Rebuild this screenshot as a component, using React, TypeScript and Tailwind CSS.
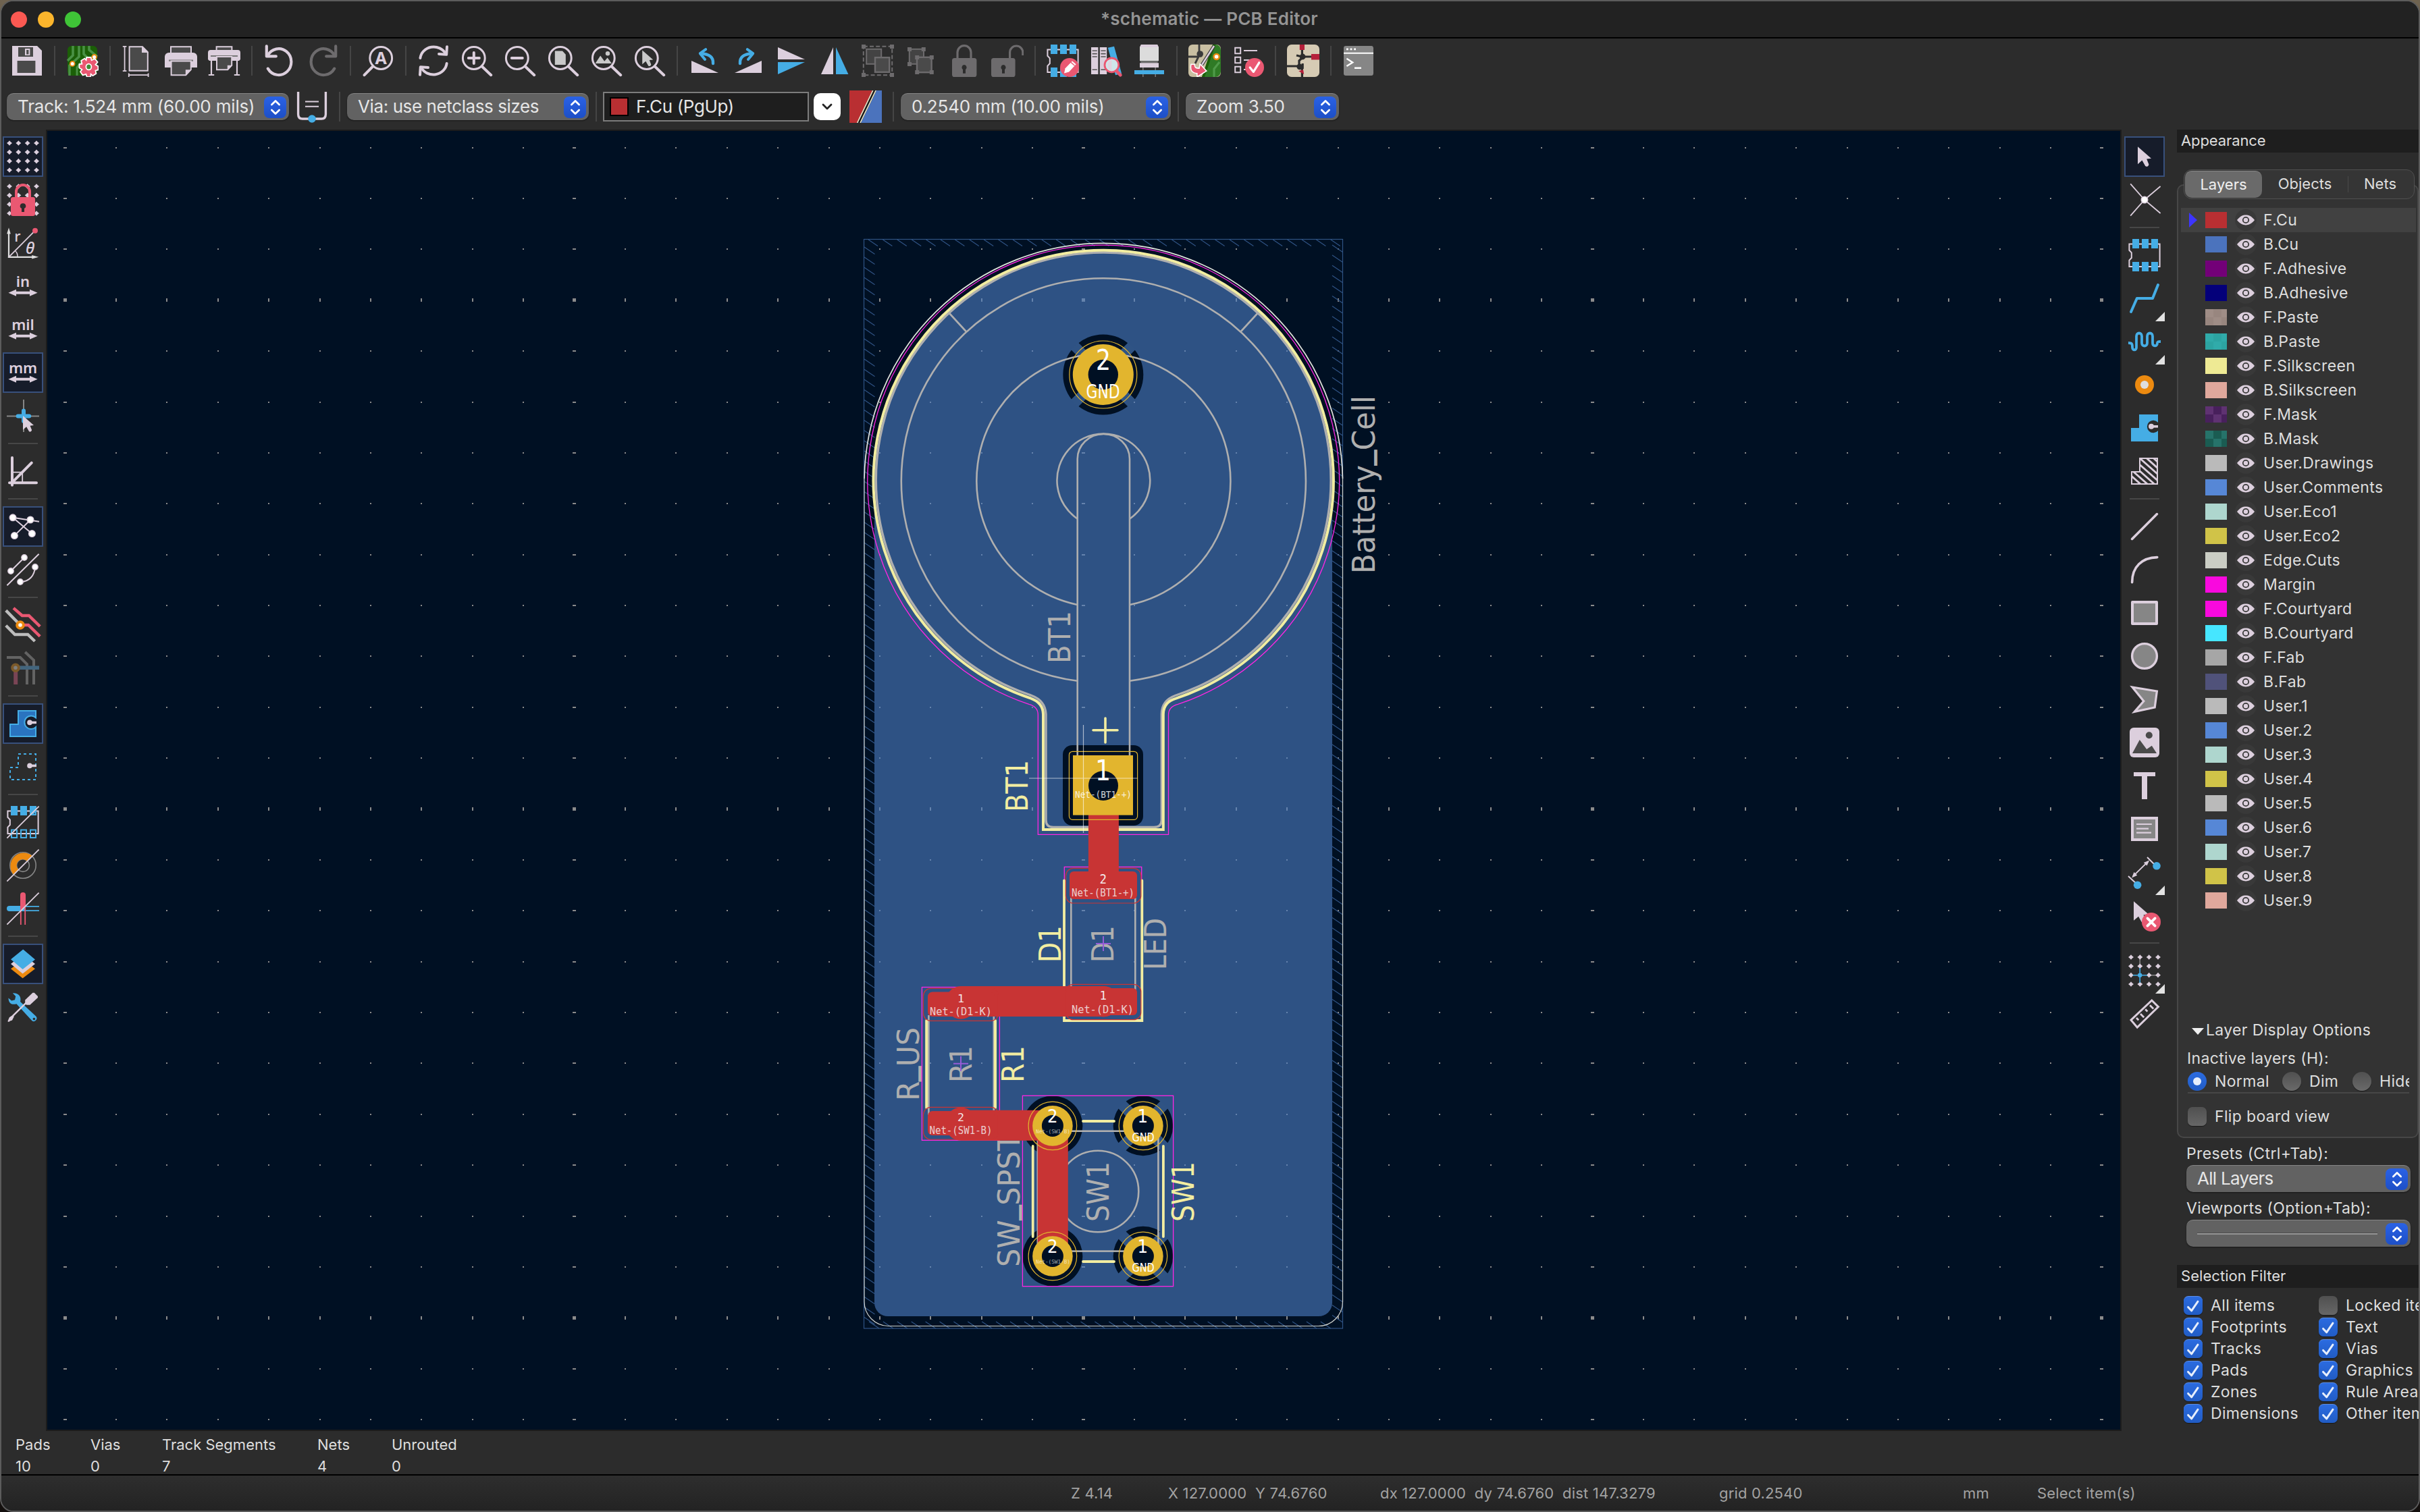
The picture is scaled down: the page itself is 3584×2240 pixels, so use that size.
import React from "react";

const L = "#dccfdd";
const B = "#45ade5";
const P = "#ea5872";
const O = "#ec8a10";
const D = "#4a4a4a";
const G = "#6d6b6d";
const BG = "#2c2c2c";

function Ico({ children, className = "" }: { children: React.ReactNode; className?: string }) {
  return (
    <svg viewBox="0 0 24 24" className={"size-12 shrink-0 " + className} fill="none">
      {children}
    </svg>
  );
}

/* ---------- shared icon pieces ---------- */

const steps = [2, 8.67, 15.33, 22];

function Dots({ skip = () => false }: { skip?: (i: number, j: number) => boolean }) {
  return (
    <g fill={L}>
      {steps.map((y, j) =>
        steps.map((x, i) =>
          skip(i, j) ? null : (
            <path key={`${i}-${j}`} d={`M${x - 2} ${y}l1.1-.9.9-1 .9 1 1.1.9-1.1.9-.9 1-.9-1z`} />
          ),
        ),
      )}
    </g>
  );
}

function Lens({ children }: { children?: React.ReactNode }) {
  return (
    <>
      <circle cx="9.9" cy="10" r="8.2" stroke={L} strokeWidth="1.5" />
      <path d="M16.2 16.5L22.6 22.6" stroke={L} strokeWidth="2" strokeLinecap="round" />
      {children}
    </>
  );
}

const ChipBody = () => (
  <path d="M.7 3.7H23.3V20.5H.7V15.8L2.4 14V10.2L.7 8.4Z" stroke={L} strokeWidth="1" />
);

const Cursor = ({ x = 0, y = 0, fill = L }: { x?: number; y?: number; fill?: string }) => (
  <g transform={`translate(${x} ${y})`}>
    <path d="M0 0V13L3.2 10.2 5.6 14.4A1.6 1.6 0 0 0 8.2 13.2L6.6 9.2 10 8.8Z" fill={fill} />
  </g>
);

const Arrows = () => (
  <path d="M1.2 16.9L7 14.4V15.9H17V14.4L22.8 16.9 17 19.4V17.9H7V19.4Z" fill={L} />
);

const UnitText = ({ t }: { t: string }) => (
  <>
    <text x="12" y="12.7" fontSize="11" fontWeight="600" textAnchor="middle" fontFamily="'Noto Sans', sans-serif" fill={L}>
      {t}
    </text>
    <Arrows />
  </>
);

/* ---------- top toolbar ---------- */

const topIcons: Record<string, React.ReactNode> = {
  save: (
    <>
      <path d="M1 1H19.5L23 4.5V23H1Z" fill={L} />
      <path d="M5.5 2H16.5V9H5.5Z" fill={D} />
      <path d="M10.5 3H14.2V8H10.5Z" fill={L} />
      <path d="M11.6 4H13.2V7.2H11.6Z" fill={D} />
      <path d="M4.8 12H18.2V21H4.8Z" fill={D} />
    </>
  ),
  setup: (
    <>
      <rect x="1" y="1" width="22" height="22" rx="3" fill="#1b5f07" />
      <path d="M5 1V8L1 12M9.5 1V9L2.5 15.5V23M13 1V7L18 12M17 1V4L23 9" stroke="#4a9145" strokeWidth="1.8" />
      <path d="M8 23V17L12 12" stroke="#4a9145" strokeWidth="1.5" />
      <circle cx="4.6" cy="14.2" r="1.7" fill="#fff" stroke={O} strokeWidth=".9" />
      <circle cx="20.8" cy="9.2" r="1.7" fill="#fff" stroke={O} strokeWidth=".9" />
      <g transform="translate(16.7 16.5)">
        <path
          d="M-1.6-7H1.6L2.1-4.9 4.5-6 6.6-3.5 5-1.6 7-.4V2.2L5 2.8 5.5 5 3 6.6 1.6 5.4 1.4 7.4H-1.4L-2 5.4-4.4 6.2-6.2 3.6-5 2-7 .8V-2L-5-2.2-5.6-4.6-3-6.2-1.9-5Z"
          fill={P}
          stroke="#fff"
          strokeWidth=".9"
        />
        <ellipse rx="2" ry="2.2" fill="#3f8a35" stroke="#fff" strokeWidth=".9" />
      </g>
    </>
  ),
  page: (
    <>
      <path d="M5.8 1.6H15.5L19.4 5.6V19.4H5.8Z" fill={D} stroke={L} strokeWidth="1" />
      <path d="M15 1.2V6H19.9Z" fill={L} />
      <path d="M2.3 1.4V19.6M.9 1.4H3.7M.9 19.6H3.7M5.4 22.6H19.8M5.4 21.2V24M19.8 21.2V24" stroke={L} strokeWidth=".9" />
    </>
  ),
  print: (
    <>
      <path d="M4.5 1.6H19.5V8H4.5Z" fill={D} stroke={L} strokeWidth="1" />
      <path d="M3 6H21A3 3 0 0 1 24 9V17H0V9A3 3 0 0 1 3 6Z" fill={L} />
      <path d="M3 11.2H21V12.4H3Z" fill="#777" />
      <path d="M4.8 12.2H19.4V18.6L15.6 22.6H4.8Z" fill={D} stroke={L} strokeWidth="1" />
      <path d="M15.4 22.8V18.6H19.6Z" fill={L} />
    </>
  ),
  plot: (
    <>
      <path d="M6.3 1.6H17.7V6H6.3Z" fill={D} stroke={L} strokeWidth="1" />
      <path d="M2 4H22A2 2 0 0 1 24 6V11L23 12H1L0 11V6A2 2 0 0 1 2 4Z" fill={L} />
      <path d="M2 8H22V9H2Z" fill="#777" />
      <path d="M6.5 9H17.6V15.4L14.6 18.6H6.5Z" fill={D} stroke={L} strokeWidth="1" />
      <path d="M14.4 18.8V15.4H17.8Z" fill={L} />
      <path d="M2.5 12V22.4M21.5 12V22.4M.4 22.5H4.6M19.4 22.5H23.6" stroke={L} strokeWidth="1.1" />
    </>
  ),
  undo: (
    <>
      <path d="M3.2 8.2A9.3 9.7 0 1 1 3.4 17.8" stroke={L} strokeWidth="2.1" strokeLinecap="round" />
      <path d="M2.4 1.2V8.7H9.4" stroke={L} strokeWidth="2.1" strokeLinecap="round" strokeLinejoin="round" />
    </>
  ),
  redo: (
    <g transform="translate(24 0) scale(-1 1)" stroke={G} strokeWidth="2.1" strokeLinecap="round" strokeLinejoin="round">
      <path d="M3.2 8.2A9.3 9.7 0 1 1 3.4 17.8" />
      <path d="M2.4 1.2V8.7H9.4" />
    </g>
  ),
  find: (
    <>
      <circle cx="14.1" cy="10" r="8.2" stroke={L} strokeWidth="1.5" />
      <path d="M7.8 16.5L1.8 22.6" stroke={L} strokeWidth="2" strokeLinecap="round" />
      <text x="14.1" y="14.5" fontSize="12.5" fontWeight="700" textAnchor="middle" fontFamily="'Noto Sans', sans-serif" fill={L}>
        A
      </text>
    </>
  ),
  refresh: (
    <g stroke={L} strokeWidth="2" strokeLinecap="round" strokeLinejoin="round">
      <path d="M2.2 10A10 9.4 0 0 1 21 6.8" />
      <path d="M22 1.6L21.6 7.4 16 7" />
      <path d="M21.8 14A10 9.4 0 0 1 3 17.2" />
      <path d="M2 22.4L2.4 16.6 8 17" />
    </g>
  ),
  zin: (
    <Lens>
      <path d="M9.9 6V14M5.9 10H13.9" stroke={L} strokeWidth="2" strokeLinecap="round" />
    </Lens>
  ),
  zout: (
    <Lens>
      <path d="M5.9 10H13.9" stroke={L} strokeWidth="2" strokeLinecap="round" />
    </Lens>
  ),
  zpage: (
    <Lens>
      <path d="M5.9 4.8H11.5L13.9 7.4V15H5.9Z" fill="#c9c9c9" />
    </Lens>
  ),
  zobj: (
    <Lens>
      <path d="M3.8 14L7.6 8.2 10.6 12.4 12.8 9.8 16 14Z" fill="#c9c9c9" />
      <circle cx="13" cy="6.6" r="1.6" fill="#c9c9c9" />
    </Lens>
  ),
  zsel: (
    <Lens>
      <g transform="translate(6.6 4.2) scale(.8)">
        <Cursor fill="#c9c9c9" />
      </g>
    </Lens>
  ),
  rccw: (
    <>
      <path d="M2 12V21H22Z" fill={L} />
      <path d="M18 14C18.4 9.4 15.4 7 9 6.6" stroke={B} strokeWidth="2.2" strokeLinecap="round" />
      <path d="M12.6 3.6L8.4 6.6 12 11" stroke={B} strokeWidth="2" strokeLinecap="round" strokeLinejoin="round" />
    </>
  ),
  rcw: (
    <g transform="translate(24 0) scale(-1 1)">
      <path d="M2 12V21H22Z" fill={L} />
      <path d="M18 14C18.4 9.4 15.4 7 9 6.6" stroke={B} strokeWidth="2.2" strokeLinecap="round" />
      <path d="M12.6 3.6L8.4 6.6 12 11" stroke={B} strokeWidth="2" strokeLinecap="round" strokeLinejoin="round" />
    </g>
  ),
  mv: (
    <>
      <path d="M2 2V11H22Z" fill={L} />
      <path d="M2 22V13H22Z" fill={B} />
    </>
  ),
  mh: (
    <>
      <path d="M11 2V22H2Z" fill={L} />
      <path d="M13 2V22H22.2Z" fill={B} />
    </>
  ),
  group: (
    <g stroke={G}>
      <rect x="1.4" y="1.4" width="21.2" height="21.2" strokeWidth="1" strokeDasharray="3 1.6" />
      <g fill={G} stroke="none">
        <path d="M0 0H3V3H0ZM21 0H24V3H21ZM0 21H3V24H0ZM21 21H24V24H21Z" />
      </g>
      <rect x="3.6" y="3.4" width="11" height="11" fill="#434343" strokeWidth="1" />
      <rect x="10" y="9.6" width="10.6" height="10.8" fill={D} strokeWidth="1.2" />
    </g>
  ),
  ungroup: (
    <g stroke={G}>
      <rect x="3.4" y="3.4" width="10.6" height="11" fill="#434343" strokeWidth="1" />
      <rect x="9" y="9.4" width="10.8" height="11.2" fill={D} strokeWidth="1.2" />
      <path
        d="M2 2H5V5H2ZM12.4 2H15.4V5H12.4ZM2 13H5V16H2ZM7.6 8H10.6V11H7.6ZM18.4 8H21.4V11H18.4ZM7.6 19H10.6V22H7.6ZM18.4 19H21.4V22H18.4Z"
        fill={G}
        stroke="none"
      />
    </g>
  ),
  lock: (
    <>
      <rect x="3" y="10" width="18.2" height="14" rx="1.8" fill={G} />
      <path d="M7 11V5.8A5 5 0 0 1 17 5.8V11" stroke={G} strokeWidth="1.6" />
      <path d="M12 15A2 2 0 0 1 13 18.6V21.4H11V18.6A2 2 0 0 1 12 15Z" fill={BG} />
    </>
  ),
  unlock: (
    <>
      <rect x="0" y="10" width="17.8" height="14" rx="1.8" fill={G} />
      <path d="M13.8 11V5.8A4.8 4.8 0 0 1 23.4 5.8V8" stroke={G} strokeWidth="1.6" />
      <path d="M9 15A2 2 0 0 1 10 18.6V21.4H8V18.6A2 2 0 0 1 9 15Z" fill={BG} />
    </>
  ),
  fpedit: (
    <>
      <ChipBody />
      <path d="M3 0H8V7H3ZM10 0H15V7H10ZM17 0H22V7H17ZM3 17H8V24H3ZM10 17H15V24H10ZM17 17H22V24H17Z" fill={B} />
      <circle cx="17" cy="17" r="7" fill={P} />
      <path d="M13 21.2L13.8 17.6 19 12.2 21.8 14.6 16.6 20.2Z" fill="#fff" />
      <path d="M18 13.2L20.8 15.6" stroke={P} strokeWidth=".7" />
    </>
  ),
  lib: (
    <>
      <path d="M1 2H6.2V22H1ZM7.4 2H12.6V22H7.4Z" fill={L} />
      <path d="M13.4 2.4L18 1.4 23.6 21.6 19 22.6Z" fill={B} />
      <path d="M1.8 4.6H5.4M1.8 6.8H5.4M1.8 9H5.4M1.8 18.6H5.4M8.2 4.6H11.8M8.2 6.8H11.8M8.2 9H11.8M8.2 18.6H11.8" stroke="#555" strokeWidth=".8" />
      <circle cx="16.2" cy="15.2" r="5.2" fill="#cfe6ea" stroke={P} strokeWidth="1.4" />
      <path d="M16.2 11.2A4.2 4.2 0 0 0 16.2 19.2Z" fill="#e2d4e0" />
      <path d="M19.8 19.6L22.6 22.6" stroke={P} strokeWidth="2.4" strokeLinecap="round" />
    </>
  ),
  view3d: (
    <>
      <path d="M6 0H18L19 2V12H5V2Z" fill="#dcdcdc" />
      <path d="M6 0H18L19 2H5Z" fill={L} />
      <path d="M5 12H19L18 13.6H6Z" fill="#6d6d6d" />
      <path d="M5 13.6H19V17H5Z" fill={L} />
      <path d="M7.4 17V24M16.6 17V24" stroke="#777" strokeWidth=".8" />
      <path d="M1 19H23V22H1Z" fill={B} />
    </>
  ),
  update: (
    <>
      <rect x="0" y="0" width="24" height="24" rx="3" fill="#c9bfa2" />
      <path d="M20 0A4 4 0 0 1 24 4V20A4 4 0 0 1 20 24H10L19 0Z" fill="#2f7a25" />
      <path d="M20 0L12 24H10L18 0Z" fill="#1b5f07" />
      <path d="M8 0V7M0 9H7M8 8L5 14" stroke="#3a3a3a" strokeWidth="1.4" />
      <circle cx="8.6" cy="7" r="2.4" fill="#3a3a3a" />
      <path d="M19 1L10 15" stroke="#3a3a3a" strokeWidth="2.4" />
      <path d="M19 1L10 15" stroke={L} strokeWidth="1.2" />
      <circle cx="20.8" cy="9" r="2" fill="#fff" stroke={O} strokeWidth="1.2" />
      <path d="M19 24V18L23 13" stroke="#4f9a49" strokeWidth="1.6" />
      <path d="M2 14.6C1 19 2.8 21.2 6.4 21.4V24L13.4 19.6 8.6 14.4 8 17.6C5.2 17.6 4.6 16.8 4.6 14.6Z" fill={P} stroke="#fff" strokeWidth=".8" />
    </>
  ),
  drc: (
    <>
      <path d="M2.6 2.4H6.6V6.6H2.6ZM2.6 9.4H6.6V13.6H2.6ZM2.6 16.4H6.6V20.6H2.6Z" stroke={L} strokeWidth="1" />
      <path d="M9 4.5H19M9 11.5H14M9 18.5H11" stroke={L} strokeWidth="1" />
      <circle cx="17" cy="17" r="7" fill={P} />
      <path d="M13.6 17L16.2 20.2 20.4 13.4" stroke="#fff" strokeWidth="1.6" strokeLinecap="round" strokeLinejoin="round" />
    </>
  ),
  swap: (
    <>
      <rect width="24" height="24" rx="3.4" fill="#d6cbb4" />
      <path d="M11.2 4V8M12 9H18M8 16H0M11.2 24V18L9 16V12L12 9M7 8L11 9M11.6 14V18" stroke="#2c2c2c" strokeWidth="1.6" />
      <circle cx="11.6" cy="9" r="2.2" fill="#2c2c2c" />
      <circle cx="9.4" cy="16.4" r="2.2" fill="#2c2c2c" />
      <path d="M9.4 0H13V4H9.4ZM18 7H24V11.2H18Z" fill="#b51f3a" />
      <path d="M8.6 19.6L12 18.6 12.6 22Z" fill="#b51f3a" />
    </>
  ),
  console: (
    <>
      <rect x="1" y="1" width="22" height="22" rx="1.6" fill="#868686" />
      <path d="M1 6.4H23" stroke="#fff" strokeWidth="1" />
      <path d="M3 3.4H4.4M5.8 3.4H7.2M8.6 3.4H10" stroke="#fff" strokeWidth="1.4" />
      <path d="M3.2 10.4L7.6 13.2 3.2 16M9 17.4H14" stroke="#fff" strokeWidth="1.2" />
    </>
  ),
};

const topOrder = [
  "save", "|", "setup", "|", "page", "print", "plot", "|", "undo", "redo", "|", "find", "|",
  "refresh", "zin", "zout", "zpage", "zobj", "zsel", "|", "rccw", "rcw", "mv", "mh", "group", "ungroup", "lock", "unlock", "|",
  "fpedit", "lib", "view3d", "|", "update", "drc", "|", "swap", "|", "console",
];

/* ---------- left toolbar ---------- */

const leftIcons: Record<string, React.ReactNode> = {
  grid: <Dots />,
  gridlock: (
    <>
      <Dots />
      <rect x="3" y="10" width="18" height="14" rx="1.6" fill={P} />
      <path d="M7 11V6A5 5 0 0 1 17 6V11" stroke={P} strokeWidth="2" />
      <path d="M12 14.6A2 2 0 0 1 13 18.4V21H11V18.4A2 2 0 0 1 12 14.6Z" fill={BG} />
    </>
  ),
  polar: (
    <>
      <path d="M1.5 22.5V3M.9 22.4H21" stroke="#dedede" strokeWidth="1.1" />
      <path d="M1.5 .6L2.9 5.2H.1ZM23.6 22.4L18.6 23.8V21Z" fill="#dedede" />
      <path d="M1.5 22.4L20.6 3.2" stroke={L} strokeWidth=".9" />
      <path d="M6.4 18C7.6 19 8 20.4 8 22" stroke={L} strokeWidth=".8" />
      <circle cx="21" cy="2.9" r="2" fill={P} />
      <text x="5.6" y="11.2" fontSize="11" fontFamily="'Noto Sans', sans-serif" fontWeight="500" fill={L}>r</text>
      <text x="14" y="19.8" fontSize="12" fontStyle="italic" fontFamily="'Noto Sans', sans-serif" fontWeight="500" fill={L}>θ</text>
    </>
  ),
  in: <UnitText t="in" />,
  mil: <UnitText t="mil" />,
  mm: <UnitText t="mm" />,
  fullcursor: (
    <>
      <path d="M12.5 0V24M0 12.3H24" stroke="#868686" strokeWidth="1" />
      <path d="M12.5 8.3V16M8.3 12.3H16.6" stroke={B} strokeWidth="3" strokeLinecap="round" />
      <g transform="translate(12 12) scale(.8)">
        <Cursor />
      </g>
    </>
  ),
  angle: (
    <>
      <path d="M4 2V22.4M2 20.6H22M4 20.4L18.4 5.8" stroke={L} strokeWidth="2" strokeLinecap="round" />
      <path d="M4.4 12.8H11.6V20" stroke={L} strokeWidth=".9" />
    </>
  ),
  rats: (
    <>
      <path d="M4.5 5.4L24 8.4M4.5 5.4L18.6 17.2M5.6 18.8L17.6 7" stroke={L} strokeWidth="1" />
      <g fill="#fff" stroke={L} strokeWidth=".7">
        <circle cx="4.5" cy="5.4" r="2.4" />
        <circle cx="17.5" cy="7" r="2.4" />
        <circle cx="18.7" cy="17.3" r="2.4" />
        <circle cx="5.7" cy="18.8" r="2.4" />
      </g>
    </>
  ),
  curved: (
    <>
      <path d="M.2 23.6L23.8 .4M3 13L13 3M10 21C17 21 20.6 16 21 10" stroke={L} strokeWidth="1" />
      <g fill="#fff" stroke={L} strokeWidth=".7">
        <circle cx="3" cy="13" r="2.1" />
        <circle cx="13" cy="3" r="2.1" />
        <circle cx="21" cy="10" r="2.1" />
        <circle cx="10" cy="21" r="2.1" />
      </g>
    </>
  ),
  hl: (
    <>
      <path d="M5 -.6L11.4 5H16.4L24.6 13" stroke={P} strokeWidth="2.2" />
      <path d="M10 12H16L24.6 20.4" stroke={P} strokeWidth="2.2" />
      <path d="M-.6 1.2L9 11M-.6 12.4L6 19H15.6L20.8 24" stroke="#bdbdbd" strokeWidth="2.2" />
      <circle cx="10" cy="12" r="2.4" fill="#fff" stroke={O} strokeWidth="2" />
    </>
  ),
  netcolor: (
    <g opacity=".9">
      <path d="M0 4H10L15 9V24M13.6 0L20 6V24" stroke="#6a6a6a" strokeWidth="2" />
      <path d="M6.6 12V24" stroke="#83485a" strokeWidth="3" />
      <path d="M8 11.6H24" stroke="#466c86" strokeWidth="2.8" />
      <circle cx="6.5" cy="11.6" r="2.4" fill="#8a8a8a" stroke="#85602a" strokeWidth="2" />
    </g>
  ),
  zonefill: (
    <>
      <path d="M2.5 12.5H8.5V2.5H21.5V7.6A4.9 4.9 0 1 0 21.5 14.6V21.5H2.5Z" fill="#2a74c0" stroke={B} strokeWidth="1" />
      <circle cx="17" cy="11.2" r="1.9" fill={L} />
      <path d="M17 11.2H22" stroke={L} strokeWidth="1.8" />
    </>
  ),
  zoneline: (
    <>
      <path d="M2.5 12.5H8.5V2.5H21.5V21.5H2.5Z" stroke={B} strokeWidth="1" strokeDasharray="2 2" />
      <circle cx="17" cy="11.2" r="1.9" fill={L} />
      <path d="M17 11.2H22" stroke={L} strokeWidth="1.8" />
    </>
  ),
  fpsketch: (
    <>
      <ChipBody />
      <path d="M3 0H8V7H3ZM10 0H15V7H10ZM17 0H22V4L19 7H17Z" fill={B} />
      <path d="M21.5 3V6.5H18.5M3.5 23.5V17.7H7.5V23.5ZM10.5 17.7H14.5V23.5H10.5ZM17.5 17.7H21.5V23.5H17.5Z" stroke={B} strokeWidth="1" />
      <path d="M.2 23.8L23.8 .3" stroke={L} strokeWidth=".9" />
    </>
  ),
  padsketch: (
    <>
      <circle cx="12" cy="12" r="9.6" stroke="#868686" strokeWidth=".8" />
      <circle cx="12" cy="12" r="4.7" stroke="#868686" strokeWidth=".8" />
      <path d="M18.8 5L15 8.8A4.2 4.2 0 0 0 8.6 15.2L5 18.8A9.8 9.8 0 0 1 18.8 5Z" fill={O} />
      <path d="M.2 23.8L23.8 .3" stroke={L} strokeWidth=".9" />
    </>
  ),
  tracksketch: (
    <>
      <path d="M2 10H14V14H2A2 2 0 0 1 2 10Z" fill={B} />
      <path d="M14 10.4H24M12 13.6H24" stroke={B} strokeWidth=".9" />
      <path d="M10 2A2 2 0 0 1 14 2V10L10 14Z" fill={P} />
      <path d="M10.4 13V24M13.6 10V24" stroke={P} strokeWidth=".9" />
      <path d="M.2 23.8L23.8 .3" stroke={L} strokeWidth=".9" />
    </>
  ),
  layers: (
    <>
      <path d="M3 15.6L12 9 21 15.6 11.8 22.6Z" fill={O} />
      <path d="M3 12L12 5 21 12 11.8 19.2Z" fill={L} />
      <path d="M3 8.6L12.1 1.2 21 8.8 11.8 16Z" fill={B} />
    </>
  ),
  tools: (
    <>
      <path d="M1.2 5.2C1.4 9.4 4 10.6 7.2 9.6L18.6 22A2.2 2.2 0 0 0 21.6 18.8L10 8C11 4.4 9 1.4 4.4 1.6L6.6 4 6 6.6 3.6 7.2Z" fill={B} />
      <circle cx="20.2" cy="20.8" r=".9" fill={BG} />
      <path d="M1.2 22.8L2.4 20 4.4 18.6 14.6 8.6" stroke={L} strokeWidth="1.2" />
      <path d="M1.2 22.8L2.2 19.8 4.6 18.2 5.4 19 4 21.8Z" fill={L} />
      <path d="M13.6 9.4V6.8L19.2 1.4H20.4L23 4V5L17.2 10.4H14.6Z" fill={L} />
    </>
  ),
};

const leftOrder = [
  "grid*", "gridlock", "polar", "in", "mil", "mm*", "fullcursor", "|", "angle", "|", "rats*", "curved", "|", "hl", "netcolor", "|",
  "zonefill*", "zoneline", "|", "fpsketch", "padsketch", "tracksketch", "|", "layers*", "tools",
];

/* ---------- right toolbar ---------- */

const rightIcons: Record<string, React.ReactNode> = {
  select: <Cursor x={7} y={4.6} />,
  hlnet: (
    <>
      <path d="M1.6 .2L12 12 23.8 2M1.6 23.8L12 12 23.8 22" stroke={L} strokeWidth=".9" />
      <circle cx="12" cy="12" r="2.4" fill="#fff" stroke={L} strokeWidth=".7" />
    </>
  ),
  fp: (
    <>
      <ChipBody />
      <path d="M3 0H8V7H3ZM10 0H15V7H10ZM17 0H22V7H17ZM3 17H8V24H3ZM10 17H15V24H10ZM17 17H22V24H17Z" fill={B} />
    </>
  ),
  route: <path d="M2 22L6.4 12H18L22 2" stroke={B} strokeWidth="2" strokeLinecap="round" strokeLinejoin="round" />,
  tune: (
    <path
      d="M0 13C2.6 13 3 13.6 3 16.4C3 18.8 6 18.8 6 16.4V8C6 5 10 5 10 8V13C10 16 14 16 14 13V8C14 5 18 5 18 8V13C18 16 21.4 15.6 21.4 13.6C21.4 12 22 12 24 12"
      stroke={B}
      strokeWidth="1.9"
    />
  ),
  via: (
    <>
      <circle cx="12" cy="12" r="7" fill={O} />
      <circle cx="12" cy="12" r="3" fill="#dedede" />
    </>
  ),
  zone: (
    <>
      <path d="M2 12H8V2H22V8A4.6 4.6 0 1 0 22 14V22H2Z" fill={B} />
      <circle cx="17" cy="10.9" r="2" fill={L} />
      <path d="M17 10.9H22" stroke={L} strokeWidth="1.8" />
    </>
  ),
  rule: (
    <>
      <clipPath id="ruleclip">
        <path d="M2 12H8V2H22V22H2Z" />
      </clipPath>
      <g clipPath="url(#ruleclip)">
        <path d="M-4 10L14 26M0 9L18 25M3 7L22 24M6 5L24 21M8 2L26 18M12 1L26 13.6M16 0L26 9" stroke={L} strokeWidth="1.4" />
      </g>
      <path d="M2.5 12.5H8.5V2.5H21.5V21.5H2.5Z" stroke={L} strokeWidth="1" />
    </>
  ),
  line: <path d="M2.8 21.2L21.2 2.8" stroke={L} strokeWidth="1.8" strokeLinecap="round" />,
  arc: <path d="M2.8 21.4C2.8 10 10 3 21.4 2.8" stroke={L} strokeWidth="1.8" strokeLinecap="round" />,
  rect: <rect x="3" y="4" width="18" height="16" fill="#868686" stroke={L} strokeWidth="2" strokeLinejoin="round" />,
  circle: <circle cx="12" cy="12" r="9.2" fill="#868686" stroke={L} strokeWidth="1.7" />,
  poly: <path d="M3 3L21.2 6 19.6 18 4.6 21.2 11.4 13.4Z" fill="#868686" stroke={L} strokeWidth="1.6" />,
  image: (
    <>
      <rect x="1" y="1" width="22" height="22" rx="3" fill={L} />
      <path d="M3 20L8.4 10 13.6 17 17.4 14.4 21 20Z" fill={D} />
      <circle cx="15.4" cy="6.6" r="2.5" fill={D} />
    </>
  ),
  text: <path d="M4 2H20V5H14V22H10V5H4Z" fill={L} />,
  textbox: (
    <>
      <rect x="3" y="4" width="18" height="16" fill="#868686" stroke={L} strokeWidth="2" />
      <path d="M6 8.5H17.4M6 11.8H15M6 14.8H17" stroke={L} strokeWidth="1.1" />
    </>
  ),
  dim: (
    <>
      <path d="M14 1L20 7M0 15L6 20.6M3.4 15.2L14.6 4.2" stroke={L} strokeWidth="1" />
      <path d="M15.6 3.2L13.8 7.2 11.4 5ZM2.6 16.2L4.2 12 6.6 14.4Z" fill={L} />
      <circle cx="21" cy="7.4" r="2.9" fill={B} />
      <circle cx="6.8" cy="21.6" r="2.9" fill={B} />
    </>
  ),
  del: (
    <>
      <g transform="translate(4 1.6) scale(1.1)">
        <Cursor />
      </g>
      <circle cx="17" cy="17" r="7" fill={P} />
      <path d="M14.2 14.2L19.8 19.8M19.8 14.2L14.2 19.8" stroke="#fff" strokeWidth="1.9" strokeLinecap="round" />
    </>
  ),
  origin: (
    <>
      <path d="M8.6 2V8M16 15.4H22" stroke="#868686" strokeWidth=".8" />
      <Dots skip={(i, j) => i === 1 && j === 2} />
      <path d="M8.6 10V21M3.4 15.4H14" stroke={B} strokeWidth=".8" />
      <circle cx="8.6" cy="15.4" r="1.6" fill={B} />
    </>
  ),
  measure: (
    <>
      <path d="M2 16.6L17.4 2 22.2 6.8 6.6 22Z" stroke={L} strokeWidth="1.5" />
      <path d="M6 15L7.6 16.6M9 12L11.6 14.6M12.6 8.6L14.2 10.2M16 5.6L18.6 8.2" stroke={L} strokeWidth="1.4" />
    </>
  ),
};

const rightOrder = [
  "select*", "hlnet", "|", "fp", "route+", "tune+", "via", "zone", "rule", "|", "line", "arc", "rect", "circle", "poly", "image",
  "text", "textbox", "dim+", "del", "|", "origin+", "measure",
];

function VBar({ order, icons }: { order: string[]; icons: Record<string, React.ReactNode> }) {
  return (
    <>
      {order.map((k, i) => {
        if (k === "|")
          return (
            <div key={i} className="flex h-[18px] w-[60px] items-center justify-center">
              <div className="h-[2px] w-11 bg-[#474747]" />
            </div>
          );
        const active = k.endsWith("*");
        const more = k.endsWith("+");
        return (
          <div key={i} className="flex h-16 w-[60px] items-center">
            <div
              className={
                active
                  ? "flex size-[60px] items-center justify-center border-2 border-[#38507c] bg-[#161c2a]"
                  : "relative flex size-[60px] items-center justify-center"
              }
            >
              <Ico className="overflow-visible">{icons[k.replace(/[*+]/, "")]}</Ico>
              {more && (
                <svg viewBox="0 0 14 14" className="absolute -bottom-1 right-0 size-3.5">
                  <path d="M0 14L14 0V14Z" fill="#e2e2e2" />
                </svg>
              )}
            </div>
          </div>
        );
      })}
    </>
  );
}

/* ---------- form controls ---------- */

function Select({ label, className, track = "tracking-[-0.18px]" }: { label?: string; className: string; track?: string }) {
  return (
    <div
      className={
        "flex h-10 shrink-0 items-center justify-between rounded-[10px] border-t border-[#858585] bg-[#626262] pl-4 pr-1 shadow-[0_1px_2px_rgba(0,0,0,0.5)] " +
        className
      }
    >
      {label ? (
        <span className={"mb-0.5 whitespace-pre text-[26px] leading-none text-[#e6e6e6] " + track}>{label}</span>
      ) : (
        <div className="mr-3 h-[3px] flex-1 border-t border-[#4c4c4c] bg-[#949494]" />
      )}
      <div className="flex h-8 w-[33px] shrink-0 items-center justify-center rounded-[8px] bg-linear-to-b from-[#2a62e6] to-[#1d4fc6]">
        <svg viewBox="0 0 16 24" className="h-6 w-4" fill="none" stroke="#fff" strokeWidth="2.8" strokeLinecap="round" strokeLinejoin="round">
          <path d="M2.4 8L8 2.6 13.6 8M2.4 16L8 21.4 13.6 16" />
        </svg>
      </div>
    </div>
  );
}

function Check({ on }: { on?: boolean }) {
  return on ? (
    <div className="flex size-7 shrink-0 items-center justify-center rounded-[7px] border-t border-[#5b8fe8] bg-linear-to-b from-[#2b6be0] to-[#215cc4] shadow-[0_1px_1px_rgba(0,0,0,0.5)]">
      <svg viewBox="0 0 20 20" className="size-5" fill="none" stroke="#e6eefc" strokeWidth="3" strokeLinecap="round" strokeLinejoin="round">
        <path d="M2.6 11.4L7.6 16.8 17 3.2" />
      </svg>
    </div>
  ) : (
    <div className="size-7 shrink-0 rounded-[7px] bg-linear-to-b from-[#505050] to-[#676767] shadow-[0_1px_1px_rgba(0,0,0,0.5)]" />
  );
}

function Radio({ on }: { on?: boolean }) {
  return on ? (
    <div className="flex size-7 shrink-0 items-center justify-center rounded-full bg-linear-to-b from-[#2b6be0] to-[#215cc4]">
      <div className="size-3 rounded-full bg-[#e6eefc]" />
    </div>
  ) : (
    <div className="size-7 shrink-0 rounded-full bg-linear-to-b from-[#505050] to-[#6a6a6a] shadow-[0_1px_1px_rgba(0,0,0,0.5)]" />
  );
}

/* ---------- board view ---------- */

const FAB = "#afafaf";
const SILK = "#f2eda1";
const CU = "#c83434";
const GOLD = "#e2b52e";
const VOID = "#001023";
const ZONE = "#2f5384";
const CRTYD = "#ff26e2";
const STROKEFONT = "'DejaVu Sans', sans-serif";
const NETFONT = "'DejaVu Sans Mono', monospace";

function gridPath() {
  let d = "";
  for (let i = 0; i <= 40; i++) {
    for (let j = 0; j <= 25; j++) {
      const x = 96.5 + i * 75.4;
      const y = 218.6 + j * 75.38;
      const w = i % 10 === 0 ? 5 : 2;
      const h = j % 10 === 3 ? 5 : 2;
      d += `M${Math.round(x - w / 2)} ${Math.round(y - h / 2)}h${w}v${h}h${-w}z`;
    }
  }
  return d;
}

function hatchPath() {
  let d = "";
  for (let y = 366; y < 1958; y += 15.1) {
    d += `M1280 ${y.toFixed(1)}l15.5 10.5M1973 ${(y - 3).toFixed(1)}l15.5 10.5`;
  }
  for (let x = 1286; x < 1974; x += 21.4) {
    d += `M${x.toFixed(1)} 355l14 9.5`;
  }
  for (let x = 1287; x < 1974; x += 20.9) {
    d += `M${x.toFixed(1)} 1958l15 10`;
  }
  return d;
}

/* Label inside the box (x, top)-(x + w, top + cap), where cap is the capital height. */
function Label({ t, x, top, w, cap, fill = "#f3e8e8", opacity = 1, font = NETFONT }: { t: string; x: number; top: number; w: number; cap: number; fill?: string; opacity?: number; font?: string }) {
  return (
    <text x={x} y={top + cap} textLength={w} lengthAdjust="spacingAndGlyphs" fontSize={cap / 0.729} fontFamily={font} fill={fill} opacity={opacity}>
      {t}
    </text>
  );
}

/* Label that reads bottom-to-top: baseline at x, from y (bottom) upward by w. */
function VLabel({ t, x, y, w, cap = 33, fill }: { t: string; x: number; y: number; w: number; cap?: number; fill: string }) {
  const [head, tail] = t.split("_");
  return (
    <text
      transform={`translate(${x} ${y + 4}) rotate(-90)`}
      textLength={w + 6}
      lengthAdjust="spacingAndGlyphs"
      fontSize={cap / 0.729}
      fontFamily={STROKEFONT}
      fill={fill}
    >
      {head}
      {tail && (
        <>
          <tspan dy="-8" stroke={fill} strokeWidth="1.4">_</tspan>
          <tspan dy="8">{tail}</tspan>
        </>
      )}
    </text>
  );
}

function Spokes({ x, y, r, w }: { x: number; y: number; r: number; w: number }) {
  const k = r * 0.72;
  return (
    <g>
      <circle cx={x} cy={y} r={r} fill={VOID} />
      <path d={`M${x - k} ${y - k}L${x + k} ${y + k}M${x + k} ${y - k}L${x - k} ${y + k}`} stroke={ZONE} strokeWidth={w} />
    </g>
  );
}

function RoundPad({ x, y, r, hole, ring }: { x: number; y: number; r: number; hole: number; ring: number }) {
  return (
    <g>
      <circle cx={x} cy={y} r={ring} fill="none" stroke={GOLD} strokeWidth="1.2" />
      <circle cx={x} cy={y} r={r} fill={GOLD} />
      <circle cx={x} cy={y} r={hole} fill={VOID} />
    </g>
  );
}

function Board() {
  return (
    <svg viewBox="70 194 3070 1924" className="block h-[1924px] w-[3070px]">
      <rect x="70" y="194" width="3070" height="1924" fill={VOID} />
      <path d={gridPath()} fill="#8b8b8b" />

      {/* copper pour */}
      <path d="M1295 711A339 342 0 0 1 1973 711V1930A20 20 0 0 1 1953 1950H1315A20 20 0 0 1 1295 1930Z" fill="#4d7fc4" fillOpacity=".6" />
      <g fill="none" stroke={ZONE} strokeWidth="1.2">
        <rect x="1279.5" y="354.5" width="709" height="1613.5" />
        <path d={hatchPath()} />
      </g>

      {/* clearances */}
      <Spokes x={1633.8} y={555} r={59.5} w={15} />
      <rect x="1574" y="1104" width="119" height="119" rx="14" fill={VOID} />
      <circle cx="1558.9" cy="1667.9" r="44.5" fill={VOID} />
      <circle cx="1558.9" cy="1861" r="44.5" fill={VOID} />
      <Spokes x={1692.9} y={1667.9} r={44.3} w={15.6} />
      <Spokes x={1692.9} y={1861} r={44.3} w={15.6} />

      {/* board edge */}
      <path d="M1280 709V1928A36 36 0 0 0 1316 1964.5H1952A36 36 0 0 0 1988.5 1928V709" fill="none" stroke="#d0d2cd" strokeWidth="1.2" />
      <path d="M1280 709A354.3 354.5 0 0 1 1988.5 709" fill="none" stroke="#e2e4df" strokeWidth="1.7" />

      {/* fabrication layer */}
      <g fill="none" stroke={FAB} strokeWidth="2.6">
        <path d="M1528 1030.5A336.8 336.8 0 1 1 1740.4 1030.5Q1720.3 1038 1720.3 1058V1215Q1720.3 1225.4 1709 1225.4H1560Q1549 1225.4 1549 1215V1058Q1548 1038 1528 1030.5Z" strokeWidth="3.4" />
        <path d="M1595.7 1008.8A299.5 299.5 0 1 1 1673 1008.8" />
        <path d="M1595.7 896A188 188 0 1 1 1673 896" />
        <path d="M1595.7 768.6A68.9 68.9 0 1 1 1673 768.6" />
        <path d="M1595.7 1119V680A38.6 37 0 0 1 1673 680V1119" />
        <path d="M1405 463L1430.7 491M1863.5 463L1837.8 491" />
        <path d="M1586.3 1330V1468M1681.3 1330V1468" />
        <path d="M1375.4 1504V1652M1471.8 1504V1652" />
        <rect x="1536.8" y="1675.7" width="178.6" height="177.9" />
        <circle cx="1626" cy="1765" r="60.3" />
      </g>
      <g>
        <VLabel t="BT1" x={1584.5} y={979} w={72} fill={FAB} />
        <VLabel t="Battery_Cell" x={2035.5} y={846} w={258} cap={34} fill={FAB} />
        <VLabel t="D1" x={1649} y={1422} w={49} fill={FAB} />
        <VLabel t="LED" x={1727} y={1433} w={71} fill={FAB} />
        <VLabel t="R_US" x={1360.7} y={1627} w={103} fill={FAB} />
        <VLabel t="R1" x={1438.6} y={1600} w={49} fill={FAB} />
        <VLabel t="SW_SPST" x={1509.6} y={1873} w={192} fill={FAB} />
        <VLabel t="SW1" x={1641.8} y={1806} w={83} fill={FAB} />
      </g>

      {/* courtyard */}
      <g fill="none" stroke={CRTYD} strokeWidth="1.3">
        <path d="M1524 1043.4A349.3 349 0 1 1 1744.4 1043.4Q1730.5 1047 1730.5 1059V1236.4H1537.3V1059Q1537.3 1047 1524 1043.4Z" />
        <path d="M1576.3 1512V1284.4H1690.7V1512" />
        <rect x="1365.4" y="1462.5" width="115" height="226.8" />
        <rect x="1514.4" y="1623.3" width="223.2" height="282.4" />
      </g>

      {/* silkscreen */}
      <g fill="none" stroke={SILK} strokeWidth="4" strokeLinecap="round">
        <path d="M1526.7 1034.6A340.6 340.6 0 1 1 1741.7 1034.6Q1723 1040 1722.8 1058V1229H1545V1058Q1544.6 1041 1526.7 1034.6Z" />
        <path d="M1619 1081.8H1655M1637 1064V1100" strokeWidth="3.6" />
        <path d="M1576 1304.5V1512H1691.3V1304.5" strokeWidth="3.8" />
        <path d="M1372.2 1512V1641M1474 1512V1641" />
        <path d="M1529.7 1698V1832M1722.9 1698V1832M1604 1661H1650M1604 1869H1650" strokeWidth="3.8" />
      </g>
      <VLabel t="BT1" x={1522} y={1199} w={71} fill={SILK} />
      <VLabel t="D1" x={1570.7} y={1422} w={49} fill={SILK} />
      <VLabel t="R1" x={1516} y={1600} w={49} fill={SILK} />
      <VLabel t="SW1" x={1768} y={1806} w={83} fill={SILK} />

      {/* front copper */}
      <g stroke={CU} strokeWidth="45" strokeLinecap="round" fill="none">
        <path d="M1634.4 1164V1311.5" />
        <path d="M1423 1483.6H1635" />
        <path d="M1423 1487.2H1423.1M1634 1483.8V1484" />
        <path d="M1423 1663H1423.1M1423 1667.3H1559" />
        <path d="M1559.3 1667V1861" />
      </g>
      <g fill={CU}>
        <rect x="1584" y="1291" width="100" height="41" rx="6" />
        <rect x="1584" y="1464" width="100" height="40" rx="6" />
        <rect x="1374" y="1469.5" width="99" height="36.5" rx="7" />
        <rect x="1374" y="1646" width="99" height="36" rx="7" />
      </g>
      <g fill="none" stroke={CU} strokeWidth="1.2">
        <rect x="1578.4" y="1286.4" width="111.4" height="51.6" rx="11" />
        <rect x="1578.4" y="1458.3" width="111.4" height="52.4" rx="11" />
        <rect x="1367.5" y="1464.3" width="111" height="48" rx="11" />
        <rect x="1367.5" y="1640.4" width="111" height="47.6" rx="11" />
      </g>

      {/* pads */}
      <RoundPad x={1633.8} y={555} r={45} hole={22.2} ring={50} />
      <rect x="1583.4" y="1113.3" width="101.2" height="101" rx="5" fill="none" stroke={GOLD} strokeWidth="1.2" />
      <rect x="1589" y="1119" width="89" height="88.6" fill={GOLD} />
      <circle cx="1634" cy="1164" r="22" fill={VOID} />
      <RoundPad x={1558.9} y={1667.9} r={29.8} hole={16} ring={35.8} />
      <RoundPad x={1558.9} y={1861} r={29.8} hole={16} ring={35.8} />
      <RoundPad x={1692.9} y={1667.9} r={29.8} hole={16} ring={35.8} />
      <RoundPad x={1692.9} y={1861} r={29.8} hole={16} ring={35.8} />

      {/* pad numbers and net names */}
      <Label t="2" x={1623} top={517} w={22} cap={30.5} fill="#fff" font={STROKEFONT} />
      <Label t="GND" x={1608.5} top={569.5} w={50} cap={20.3} fill="#fff" font={STROKEFONT} />
      <Label t="1" x={1622} top={1125} w={23} cap={30.5} fill="#fff" font={STROKEFONT} />
      <Label t="Net-(BT1-+)" x={1592} top={1171.5} w={84} cap={10} opacity={0.8} fill="#fff" />
      <Label t="2" x={1628.4} top={1295} w={10.5} cap={13.6} />
      <Label t="Net-(BT1-+)" x={1587} top={1317.4} w={93} cap={11} opacity={0.85} />
      <Label t="1" x={1628.6} top={1468} w={10.5} cap={13.4} />
      <Label t="Net-(D1-K)" x={1587} top={1490} w={92} cap={11} opacity={0.85} />
      <Label t="1" x={1418} top={1473} w={10} cap={12} />
      <Label t="Net-(D1-K)" x={1377} top={1493} w={92} cap={11} opacity={0.85} />
      <Label t="2" x={1418} top={1649} w={10} cap={12} />
      <Label t="Net-(SW1-B)" x={1376.5} top={1668.6} w={93} cap={11} opacity={0.85} />
      {[1667.9, 1861].map((y) => (
        <g key={y}>
          <Label t="2" x={1551} top={y - 24.6} w={15.6} cap={19.8} fill="#fff" font={STROKEFONT} />
          <Label t="Net-(SW1-B)" x={1534} top={y + 5.4} w={51} cap={5.8} fill="#fff" opacity={0.6} />
          <Label t="1" x={1684.6} top={y - 24.4} w={15.6} cap={19.4} fill="#fff" font={STROKEFONT} />
          <Label t="GND" x={1676.5} top={y + 10.8} w={33} cap={12.6} fill="#fff" font={STROKEFONT} />
        </g>
      ))}

      {/* anchors */}
      <path d="M1604.5 1074V1234M1524 1153H1684.5" stroke="#fff" strokeOpacity=".6" strokeWidth="1.2" />
      <path d="M1634 1387V1409M1623 1398H1645M1423 1564.7V1586.7M1412 1575.8H1434" stroke="#955cd6" strokeWidth="2" />
    </svg>
  );
}

/* ---------- appearance panel data ---------- */

const layerRows: [string, string, string?][] = [
  ["F.Cu", "bg-[#b92f32]"],
  ["B.Cu", "bg-[#4b73bd]"],
  ["F.Adhesive", "bg-[#730078]"],
  ["B.Adhesive", "bg-[#04007a]"],
  ["F.Paste", "bg-[#98867f]", "bg-[#9f8d86]"],
  ["B.Paste", "bg-[#2ca4a2]", "bg-[#30abaa]"],
  ["F.Silkscreen", "bg-[#eeea94]"],
  ["B.Silkscreen", "bg-[#e0a89c]"],
  ["F.Mask", "bg-[#48205c]", "bg-[#5f3272]"],
  ["B.Mask", "bg-[#1a5c52]", "bg-[#26736a]"],
  ["User.Drawings", "bg-[#bababa]"],
  ["User.Comments", "bg-[#5687d6]"],
  ["User.Eco1", "bg-[#aed6ce]"],
  ["User.Eco2", "bg-[#d0c348]"],
  ["Edge.Cuts", "bg-[#cacdc4]"],
  ["Margin", "bg-[#f909de]"],
  ["F.Courtyard", "bg-[#f909de]"],
  ["B.Courtyard", "bg-[#46e6ff]"],
  ["F.Fab", "bg-[#a6a6a6]"],
  ["B.Fab", "bg-[#50527a]"],
  ["User.1", "bg-[#bababa]"],
  ["User.2", "bg-[#5687d6]"],
  ["User.3", "bg-[#aed6ce]"],
  ["User.4", "bg-[#d0c348]"],
  ["User.5", "bg-[#bababa]"],
  ["User.6", "bg-[#5687d6]"],
  ["User.7", "bg-[#aed6ce]"],
  ["User.8", "bg-[#d0c348]"],
  ["User.9", "bg-[#e0a89c]"],
];

function Swatch({ base, alt }: { base: string; alt?: string }) {
  return (
    <div className={"grid h-6 w-8 shrink-0 grid-cols-[12px_12px_8px] grid-rows-2 " + base}>
      {alt && (
        <>
          <div className={alt} />
          <div />
          <div className={alt} />
          <div />
          <div className={alt} />
          <div />
        </>
      )}
    </div>
  );
}

function Eye() {
  return (
    <div className="flex size-8 shrink-0 items-center justify-center rounded-full bg-[#393939]">
      <svg viewBox="0 0 26 16" className="h-4 w-[26px]">
        <path d="M0 8C4.5 2.4 8.6 .6 13 .6S21.5 2.4 26 8C21.5 13.6 17.4 15.4 13 15.4S4.5 13.6 0 8Z" fill={L} />
        <circle cx="13" cy="8" r="4.2" fill={L} stroke="#393939" strokeWidth="1.8" />
      </svg>
    </div>
  );
}

const filters: [string, string, boolean][] = [
  ["All items", "Locked items", false],
  ["Footprints", "Text", true],
  ["Tracks", "Vias", true],
  ["Pads", "Graphics", true],
  ["Zones", "Rule Areas", true],
  ["Dimensions", "Other items", true],
];

function Panel() {
  return (
    <div className="flex w-[358px] shrink-0 flex-col overflow-hidden text-[23px] leading-none tracking-[0.35px] text-[#dedede]">
      <div className="flex h-[34px] shrink-0 items-center bg-[#1e1e1e] pb-0.5 pl-1.5 text-[22px] tracking-[-0.1px]">Appearance</div>

      <div className="relative mt-[47px] h-[1413px] w-[358px] shrink-0 rounded-[10px] border-2 border-[#474747] bg-[#333333]">
        <div className="absolute -top-6 left-2 flex h-11 w-[342px] items-center rounded-[12px] border border-[#505050] bg-[#353535] pl-px text-[22px] tracking-normal">
          <div className="flex h-10 w-[114px] items-center justify-center rounded-[10px] border-t border-[#858585] bg-[#6a6a6a] pb-0.5 text-[#f0f0f0]">Layers</div>
          <div className="flex h-10 w-[127px] items-center justify-center pb-0.5">Objects</div>
          <div className="h-6 w-px bg-[#4a4a4a]" />
          <div className="flex h-10 w-[94px] items-center justify-center pb-0.5">Nets</div>
        </div>

        <div className="mt-[33px] flex flex-col pl-1">
          {layerRows.map(([name, base, alt], i) => (
            <div key={name} className={"flex h-9 w-[348px] items-center " + (i === 0 ? "bg-[#414141]" : "")}>
              <div className="flex w-9 shrink-0 items-center pl-3">
                {i === 0 && (
                  <svg viewBox="0 0 12 22" className="h-[22px] w-3">
                    <path d="M0 0L12 11 0 22Z" fill="#3d35ff" />
                  </svg>
                )}
              </div>
              <Swatch base={base} alt={alt} />
              <div className="w-3 shrink-0" />
              <Eye />
              <span className="ml-2.5 whitespace-nowrap">{name}</span>
            </div>
          ))}
        </div>

        <div className="mt-[161px] flex h-[26px] items-center pl-5">
          <svg viewBox="0 0 18 10" className="mt-1 h-2.5 w-[18px]">
            <path d="M0 0H18L9 10Z" fill="#efefef" />
          </svg>
          <span className="ml-[3px]">Layer Display Options</span>
        </div>
        <div className="mt-[16px] flex h-[26px] items-center pl-[13px]">Inactive layers (H):</div>
        <div className="ml-3.5 mt-[7px] flex h-[32px] w-[328px] items-start gap-[13px] overflow-hidden border-b-2 border-[#474747]">
          <div className="flex h-7 w-[127px] shrink-0 items-center gap-3">
            <Radio on />
            <span>Normal</span>
          </div>
          <div className="flex h-7 w-[91px] shrink-0 items-center gap-3">
            <Radio />
            <span>Dim</span>
          </div>
          <div className="flex h-7 shrink-0 items-center gap-3">
            <Radio />
            <span>Hide</span>
          </div>
        </div>
        <div className="ml-3.5 mt-5 flex h-7 items-center gap-3">
          <Check />
          <span>Flip board view</span>
        </div>
      </div>

      <div className="mt-[11px] flex h-6 shrink-0 items-center pl-[14px]">Presets (Ctrl+Tab):</div>
      <Select label="All Layers" className="ml-3.5 mt-[5px] w-[332px]" track="tracking-[-0.7px]" />
      <div className="mt-[12px] flex h-6 shrink-0 items-center pl-[14px]">Viewports (Option+Tab):</div>
      <Select className="ml-3.5 mt-[5px] w-[332px]" />

      <div className="mt-[27px] flex h-[34px] shrink-0 items-center bg-[#1e1e1e] pb-0.5 pl-1.5 text-[22px] tracking-[0.05px]">Selection Filter</div>
      <div className="mt-[10px] flex w-[600px] flex-col pl-2.5">
        {filters.map(([a, b, on]) => (
          <div key={a} className="flex h-8 items-center">
            <div className="flex w-[200px] items-center gap-3">
              <Check on />
              <span className="whitespace-nowrap">{a}</span>
            </div>
            <div className="flex items-center gap-3">
              <Check on={on} />
              <span className="whitespace-nowrap">{b}</span>
            </div>
          </div>
        ))}
      </div>
    </div>
  );
}

const Sep = () => (
  <div className="flex w-[18px] shrink-0 justify-center">
    <div className="h-11 w-[2px] bg-[#454545]" />
  </div>
);

const stats: [string, string, string][] = [
  ["Pads", "10", "w-[111px]"],
  ["Vias", "0", "w-[106px]"],
  ["Track Segments", "7", "w-[230px]"],
  ["Nets", "4", "w-[110px]"],
  ["Unrouted", "0", "w-[120px]"],
];

const status: [string, string][] = [
  ["Z 4.14", "w-[144px]"],
  ["X 127.0000  Y 74.6760", "w-[314px]"],
  ["dx 127.0000  dy 74.6760  dist 147.3279", "w-[502px]"],
  ["grid 0.2540", "w-[361px]"],
  ["mm", "w-[110px]"],
  ["Select item(s)", "w-[200px]"],
];

export default function App() {
  return (
    <div className="h-[2240px] w-[3584px] overflow-hidden bg-linear-to-b from-[#6f6350] to-[#14100e] font-['Inter',sans-serif]">
      <div className="flex h-[2240px] w-[3584px] flex-col overflow-hidden rounded-[20px] border-2 border-[#5c5c5c] bg-[#2c2c2c]">
        {/* title bar */}
        <div className="flex h-[55px] shrink-0 items-center border-b-2 border-black bg-[#222222]">
          <div className="flex w-[400px] items-center gap-4 pl-3.5">
            <div className="size-6 rounded-full bg-[#fb5952]" />
            <div className="size-6 rounded-full bg-[#fbb52c]" />
            <div className="size-6 rounded-full bg-[#3fc437]" />
          </div>
          <div className="flex-1 pb-0.5 text-center text-[26px] font-semibold leading-none tracking-[0.22px] text-[#949494]">*schematic — PCB Editor</div>
          <div className="w-[402px]" />
        </div>

        {/* main toolbar */}
        <div className="mt-px flex h-16 shrink-0 items-center pl-1.5">
          {topOrder.map((k, i) =>
            k === "|" ? (
              <Sep key={i} />
            ) : (
              <div key={i} className="flex size-16 shrink-0 items-center justify-center">
                <Ico>{topIcons[k]}</Ico>
              </div>
            ),
          )}
        </div>

        {/* options toolbar */}
        <div className="mt-1 flex h-16 shrink-0 items-center pl-2">
          <Select label="Track: 1.524 mm (60.00 mils)" className="w-[418px]" />
          <Ico className="ml-2.5">
            <path d="M1.8 1V17.6C1.8 20 3 21 5 21H19C21 21 22.2 20 22.2 17.6V1" stroke={L} strokeWidth="1.7" />
            <path d="M7 8.3H17M7 11.9H17" stroke={L} strokeWidth="1" />
            <circle cx="12" cy="21" r="2.9" fill={B} />
          </Ico>
          <div className="ml-2 mr-0.5">
            <Sep />
          </div>
          <Select label="Via: use netclass sizes" className="w-[358px]" track="tracking-[-0.4px]" />
          <div className="ml-0.5 mr-px">
            <Sep />
          </div>
          <div className="flex h-11 w-[305px] items-center border-2 border-[#7c7c7c] bg-[#1e1e1e] pl-2">
            <div className="h-7 w-7 border-2 border-black bg-[#b92f32]" />
            <span className="ml-[11px] text-[26px] leading-none tracking-[-0.36px] text-[#e6e6e6]">F.Cu (PgUp)</span>
          </div>
          <div className="ml-[7px] flex h-10 w-10 items-center justify-center rounded-[10px] bg-white">
            <svg viewBox="0 0 16 10" className="h-2.5 w-4" fill="none" stroke="#222" strokeWidth="2.8" strokeLinecap="round" strokeLinejoin="round">
              <path d="M2 2L8 8 14 2" />
            </svg>
          </div>
          <Ico className="ml-[13px]">
            <path d="M0 0H24V24H0Z" fill="#4b73bd" />
            <path d="M0 0H17L5.6 24H0Z" fill="#b92f32" />
            <path d="M18.6 0L7 24" stroke="#1a1a1a" strokeWidth="2.6" />
            <path d="M17.4 0L5.8 24M19.6 0L8 24" stroke="#ece8c8" strokeWidth=".8" />
          </Ico>
          <div className="ml-2 mr-0.5">
            <Sep />
          </div>
          <Select label="0.2540 mm (10.00 mils)" className="w-[400px]" />
          <div className="mx-0.5">
            <Sep />
          </div>
          <Select label="Zoom 3.50" className="w-[227px]" />
        </div>

        {/* workspace */}
        <div className="mt-[2px] flex h-[1928px] shrink-0">
          <div className="flex w-[66px] shrink-0 flex-col pl-0.5 pt-2">
            <VBar order={leftOrder} icons={leftIcons} />
          </div>
          <div className="w-[3074px] shrink-0 border-2 border-[#1c1c1c]">
            <Board />
          </div>
          <div className="flex w-[82px] shrink-0 flex-col pl-1 pt-2">
            <VBar order={rightOrder} icons={rightIcons} />
          </div>
          <Panel />
        </div>

        {/* board statistics */}
        <div className="flex h-[64px] shrink-0 pl-[21px] pt-[4px] text-[22px] leading-8 text-[#dedede]">
          {stats.map(([k, v, w]) => (
            <div key={k} className={"shrink-0 whitespace-nowrap " + w}>
              <div>{k}</div>
              <div>{v}</div>
            </div>
          ))}
        </div>

        {/* status bar */}
        <div className="flex flex-1 items-center border-t-2 border-black bg-linear-to-b from-[#2e2e2e] to-[#232323] pl-[1584px] text-[22px] leading-none tracking-[0.18px] text-[#a2a2a2]">
          {status.map(([t, w]) => (
            <div key={t} className={"shrink-0 whitespace-pre " + w}>
              {t}
            </div>
          ))}
        </div>
      </div>
    </div>
  );
}
